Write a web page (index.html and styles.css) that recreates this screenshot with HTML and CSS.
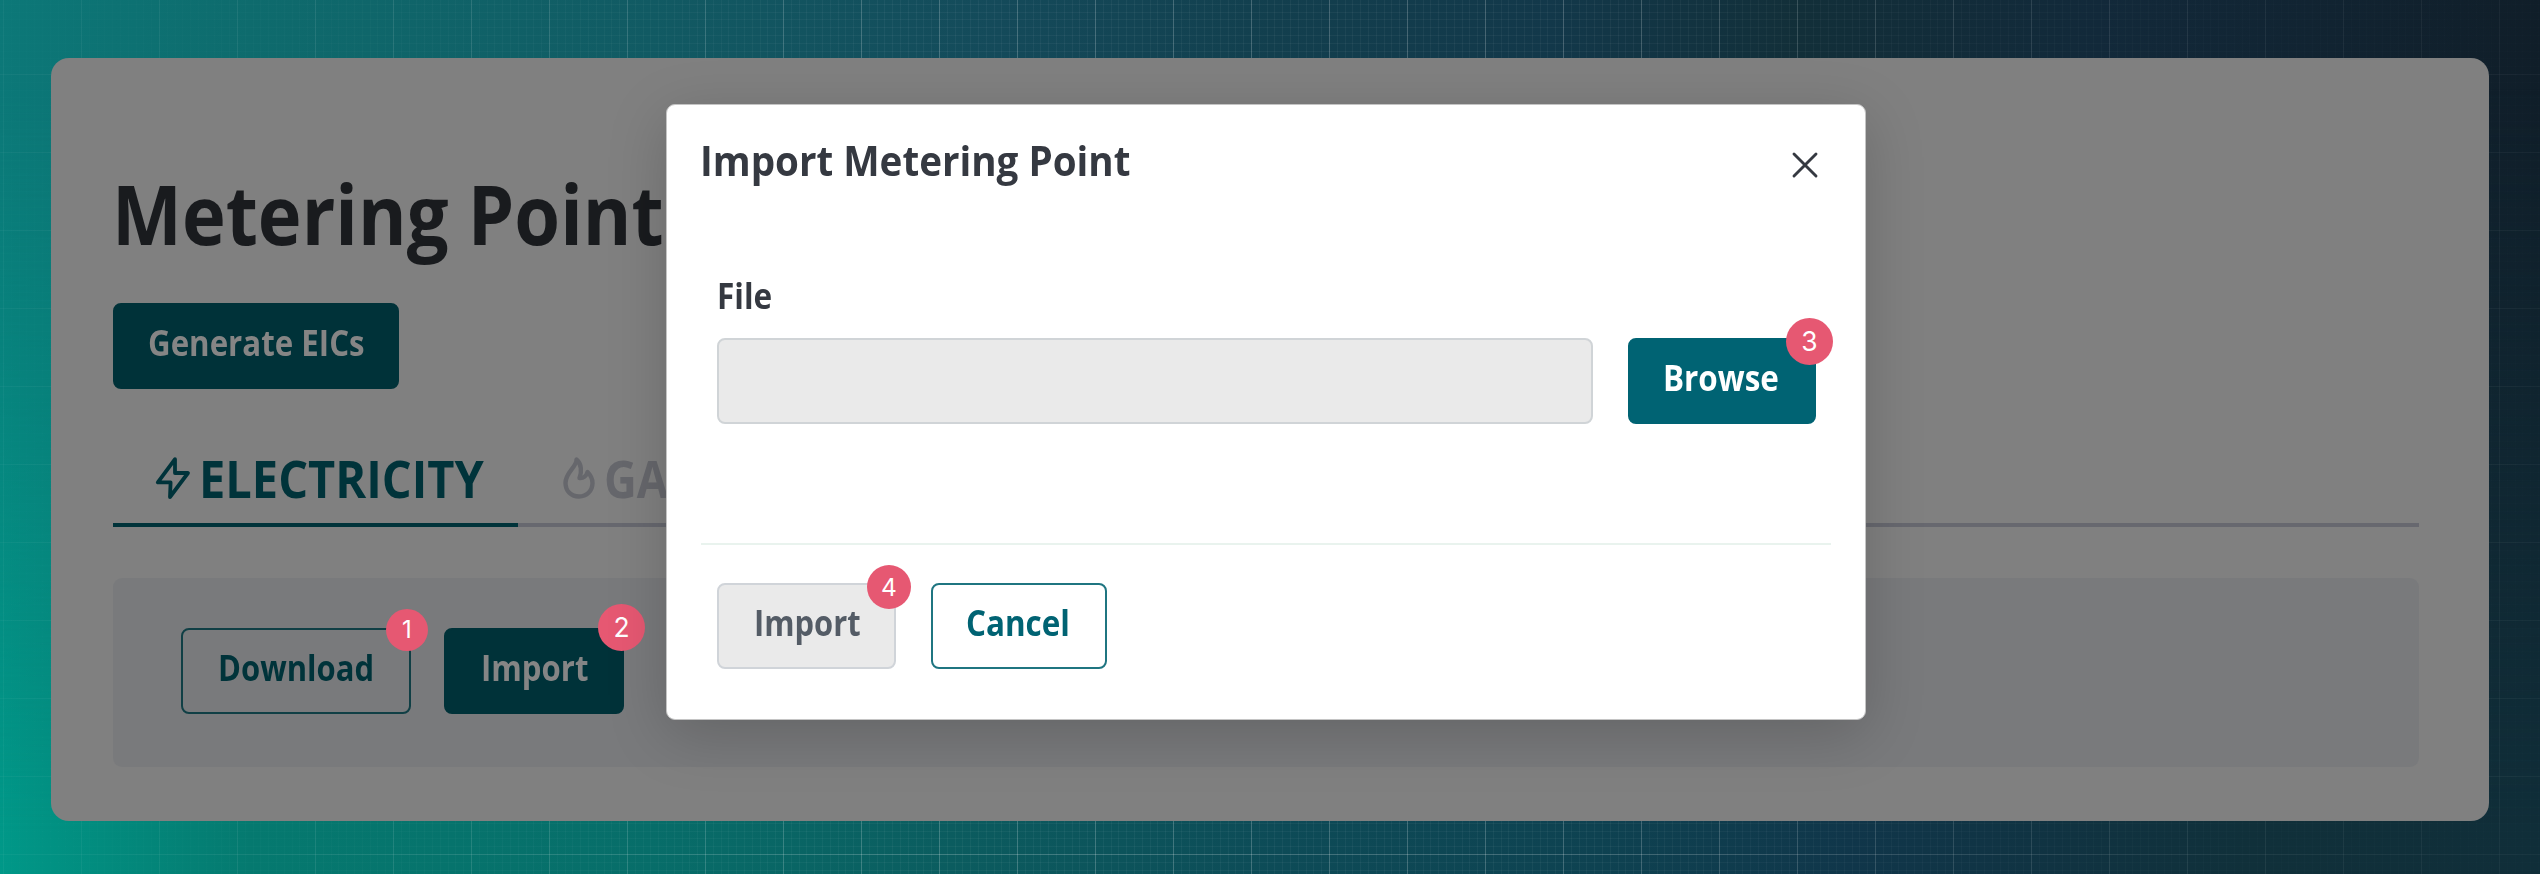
FILE: index.html
```
<!DOCTYPE html>
<html lang="en">
<head>
<meta charset="utf-8">
<title>Metering Point</title>
<link rel="stylesheet" href="styles.css">
</head>
<body>
<div class="stage">
  <div class="stage-glow"></div>
  <div class="stage-grid"></div>
  <main class="card">
    <h1 class="heading"><span class="t t-heading">Metering Point</span></h1>
    <button class="btn btn-solid-dim btn-generate"><span class="t t-generate">Generate EICs</span></button>
    <nav class="tabs">
      <div class="tab tab-active">
        <svg class="tab-icon" width="36" height="44" viewBox="0 0 36 44" fill="none" stroke="currentColor" stroke-width="3.8" stroke-linejoin="round"><path d="M20 3.2 2.8 26.4H15.6L15 41 33 17H20Z"/></svg>
        <span class="t t-electricity">ELECTRICITY</span>
      </div>
      <div class="tab tab-idle">
        <svg class="tab-icon" width="34" height="44" viewBox="0 0 34 44" fill="none" stroke="currentColor" stroke-width="4.4" stroke-linejoin="round" stroke-linecap="round"><path d="M14.5 3.5C15 11 3.500 16 3.500 27C3.500 35.500 9.500 40.500 17 40.500S30.500 35 30.500 27C30.500 22.500 28.500 19 25.500 16C24.500 19.500 21.500 22.500 17.500 22C20 16 19.500 7.500 14.500 3.500Z"/></svg>
        <span class="t t-gas">GAS</span>
      </div>
    </nav>
    <section class="panel">
      <button class="btn btn-line-dim btn-download"><span class="t t-download">Download</span><i class="badge badge-1">1</i></button>
      <button class="btn btn-solid-dim btn-import"><span class="t t-import">Import</span><i class="badge badge-2">2</i></button>
    </section>

    <div class="modal">
      <header class="modal-head">
        <h2 class="modal-title"><span class="t t-title">Import Metering Point</span></h2>
        <svg class="close" width="28" height="28" viewBox="0 0 28 28" stroke="currentColor" stroke-width="2.900" stroke-linecap="round"><path d="M3 3 25 25M25 3 3 25"/></svg>
      </header>
      <div class="modal-body">
        <label class="label"><span class="t t-file">File</span></label>
        <div class="file-row">
          <div class="input"></div>
          <button class="btn btn-solid btn-browse"><span class="t t-browse">Browse</span><i class="badge badge-3">3</i></button>
        </div>
      </div>
      <footer class="modal-foot">
        <button class="btn btn-disabled btn-submit"><span class="t t-submit">Import</span><i class="badge badge-4">4</i></button>
        <button class="btn btn-line btn-cancel"><span class="t t-cancel">Cancel</span></button>
      </footer>
    </div>
  </main>
</div>
</body>
</html>
```
FILE: styles.css
```
* { box-sizing: border-box; }
body { margin: 0; font-family: "Open Sans", "Noto Sans", sans-serif; }

.stage {
  position: relative;
  width: 2540px;
  height: 874px;
  padding: 58px 51px 53px;
  overflow: hidden;
  background: linear-gradient(90deg, #0c7878 0, #0e6b6d 250px, #115a63 650px, #144a5a 1000px, #123f4e 1270px, #12384a 1550px, #122f39 1800px, #12293a 2100px, #101e29 2540px);
}
.stage-glow {
  position: absolute;
  inset: 0;
  background: linear-gradient(90deg, #009888 0, #05796f 250px, #076d69 650px, #0b5c5f 950px, #0d4b57 1280px, #0e4251 1600px, #10364a 1850px, #10303a 2250px, #102e39 2540px);
  -webkit-mask-image: linear-gradient(180deg, transparent 10%, #000 95%);
  mask-image: linear-gradient(180deg, transparent 10%, #000 95%);
}
.stage-grid {
  position: absolute;
  inset: 0;
  background:
    repeating-linear-gradient(90deg, rgba(255,255,255,.18) 0 1px, transparent 1px 78px) 3px 0 / 78px 78px,
    repeating-linear-gradient(180deg, rgba(255,255,255,.18) 0 1px, transparent 1px 78px) 0 74px / 78px 78px,
    repeating-linear-gradient(90deg, rgba(255,255,255,.045) 0 1px, transparent 1px 7.8px) 3px 0 / 78px 78px,
    repeating-linear-gradient(180deg, rgba(255,255,255,.045) 0 1px, transparent 1px 7.8px) 0 74px / 78px 78px;
  -webkit-mask-image: linear-gradient(90deg, rgba(0,0,0,.18) 0, rgba(0,0,0,.3) 200px, #000 900px, #000 1600px, rgba(0,0,0,.3) 2250px, rgba(0,0,0,.18) 2540px);
  mask-image: linear-gradient(90deg, rgba(0,0,0,.18) 0, rgba(0,0,0,.3) 200px, #000 900px, #000 1600px, rgba(0,0,0,.3) 2250px, rgba(0,0,0,.18) 2540px);
}

.card {
  position: relative;
  width: 2438px;
  height: 763px;
  padding: 110px 70px 0 62px;
  border-radius: 18px;
  background: #808080;
}

/* condensed text runs */
.t {
  display: inline-block;
  white-space: nowrap;
  font-weight: 700;
  transform-origin: 0 50%;
}
.t-heading { transform: scaleX(.893); }
.t-electricity { transform: scaleX(.912); }
.t-gas { transform: scaleX(.88); }
.t-generate { transform: scaleX(.893); }
.t-download { transform: scaleX(.886); }
.t-import { transform: scaleX(.889); }
.t-title { transform: scaleX(.941); }
.t-file { transform: scaleX(.9); }
.t-browse { transform: scaleX(.897); }
.t-submit { transform: scaleX(.882); }
.t-cancel { transform: scaleX(.897); }

.heading {
  margin: 0 0 45px -1px;
  height: 90px;
  line-height: 90px;
  font-size: 83px;
  color: #191b1e;
}

.btn {
  position: relative;
  display: block;
  height: 86px;
  padding: 0 0 6px;
  border: 2px solid transparent;
  border-radius: 8px;
  font: 700 35px/76px "Open Sans", "Noto Sans", sans-serif;
  text-align: left;
}
.btn-solid { background: #006373; border-color: #006373; color: #fff; }
.btn-solid-dim { background: #003239; border-color: #003239; color: #858585; }
.btn-line { background: #fff; border-color: #1f7581; color: #006373; }
.btn-line-dim { background: none; border-color: #103f45; color: #00333a; }
.btn-disabled { background: #eaeaea; border-color: #d0d4d9; color: #545c66; }
.btn-generate { width: 286px; padding-left: 33px; }
.btn-download { width: 230px; padding-left: 35px; }
.btn-import { width: 180px; padding-left: 35px; }
.btn-browse { width: 188px; padding-left: 33px; }
.btn-submit { width: 179px; padding-left: 35px; }
.btn-cancel { width: 176px; padding-left: 33px; }

.tabs {
  display: flex;
  height: 79px;
  margin-top: 59px;
  box-shadow: inset 0 -4px 0 #67686f;
  font-size: 51.5px;
  line-height: 60px;
}
.tab { display: flex; }
.tab-active { width: 405px; padding-left: 42px; border-bottom: 4px solid #00333a; color: #00333a; }
.tab-idle { padding-left: 44px; color: #66676c; }
.tab-icon { flex: none; margin-top: 8px; }
.tab-active .t { margin-left: 8px; }
.tab-idle .t { margin-left: 8px; }

.panel {
  display: flex;
  gap: 33px;
  height: 189px;
  margin-top: 51px;
  padding: 50px 0 0 68px;
  border-radius: 9px;
  background: #797a7c;
}

.badge {
  position: absolute;
  display: flex;
  align-items: center;
  justify-content: center;
  border-radius: 50%;
  background: #e65872;
  color: #fff;
  font: 400 26px/1 Inter, Roboto, sans-serif;
}
.badge-1 { width: 42px; height: 42px; right: -19px; top: -21px; font-size: 24px; }
.badge-2 { width: 47px; height: 47px; right: -23px; top: -26px; font-size: 26.5px; }
.badge-3 { width: 47px; height: 47px; right: -19px; top: -22px; font-size: 26.5px; }
.badge-4 { width: 44px; height: 44px; right: -17px; top: -20px; font-size: 24.5px; }

.modal {
  position: absolute;
  left: 615px;
  top: 46px;
  width: 1200px;
  height: 616px;
  padding: 30px 34px 0;
  border: 1px solid #c4c4c4;
  border-radius: 9px;
  background: #fff;
  box-shadow: 0 14px 60px rgba(0,0,0,.18);
  color: #353941;
}
.modal-head { display: flex; justify-content: space-between; height: 51px; }
.modal-title { margin: 0 0 0 -1px; font-size: 41px; line-height: 50px; }
.close { margin: 16px 12px 0 0; }
.modal-body { padding: 90px 15px 0 16px; height: 357px; }
.label { display: block; font-size: 35px; line-height: 40px; height: 40px; }
.file-row { display: flex; justify-content: space-between; margin-top: 22px; }
.input { width: 876px; height: 86px; border: 2px solid #d0d4d7; border-radius: 8px; background: #eaeaea; }
.modal-foot { display: flex; gap: 35px; padding: 38px 0 0 16px; border-top: 2px solid #e9f3ee; }
```
